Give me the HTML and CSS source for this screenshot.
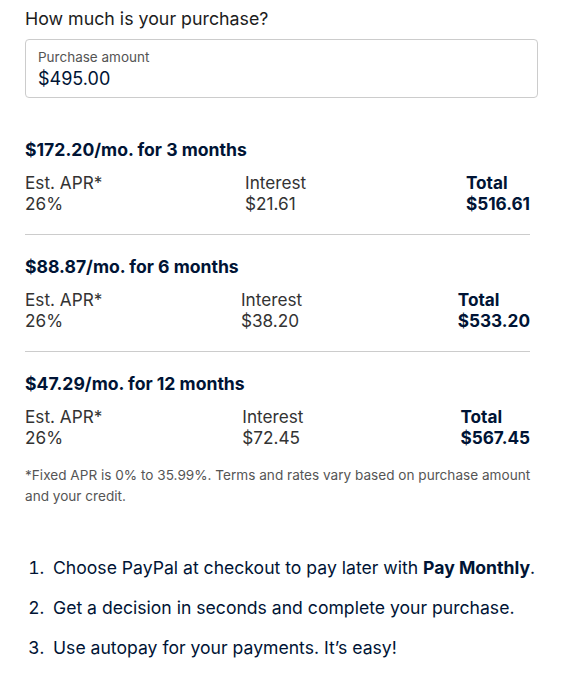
FILE: index.html
```html
<!DOCTYPE html>
<html lang="en">
<head>
<meta charset="utf-8">
<title>Pay Monthly calculator</title>
<link rel="stylesheet" href="styles.css">
</head>
<body>
<main class="calc">
  <h2 class="title">How much is your purchase?</h2>
  <div class="field">
    <div class="field-label">Purchase amount</div>
    <div class="field-value">$495.00</div>
  </div>

  <section class="plan first">
    <h3 class="plan-title">$172.20/mo. for 3 months</h3>
    <div class="plan-row">
      <div class="col"><div>Est. APR*</div><div>26%</div></div>
      <div class="col mid"><div>Interest</div><div>$21.61</div></div>
      <div class="col total"><div>Total</div><div>$516.61</div></div>
    </div>
  </section>

  <section class="plan">
    <h3 class="plan-title">$88.87/mo. for 6 months</h3>
    <div class="plan-row">
      <div class="col"><div>Est. APR*</div><div>26%</div></div>
      <div class="col mid"><div>Interest</div><div>$38.20</div></div>
      <div class="col total"><div>Total</div><div>$533.20</div></div>
    </div>
  </section>

  <section class="plan last">
    <h3 class="plan-title">$47.29/mo. for 12 months</h3>
    <div class="plan-row">
      <div class="col"><div>Est. APR*</div><div>26%</div></div>
      <div class="col mid"><div>Interest</div><div>$72.45</div></div>
      <div class="col total"><div>Total</div><div>$567.45</div></div>
    </div>
  </section>

  <p class="note">*Fixed APR is 0% to 35.99%. Terms and rates vary based on purchase amount and your credit.</p>

  <ol class="steps">
    <li>Choose PayPal at checkout to pay later with <strong>Pay Monthly</strong>.</li>
    <li>Get a decision in seconds and complete your purchase.</li>
    <li>Use autopay for your payments. It’s easy!</li>
  </ol>
</main>
</body>
</html>
```

FILE: styles.css
```css
* { box-sizing: border-box; }

body {
  margin: 0;
  background: #ffffff;
  font-family: Inter, "Liberation Sans", Arial, sans-serif;
  color: #1a1a1a;
}

.calc {
  width: 538px;
  padding: 7px 0 0 25px;
}

.title {
  margin: 0;
  font-size: 17.8px;
  line-height: 24px;
  font-weight: 400;
  color: #1c1c1c;
}

.field {
  margin-top: 8px;
  border: 1px solid #cccccc;
  border-radius: 4px;
  padding: 8px 12px 6px 12px;
}

.field-label {
  font-size: 13.5px;
  line-height: 18px;
  color: #545454;
  margin-bottom: 1px;
}

.field-value {
  font-size: 18px;
  line-height: 24px;
  color: #001435;
}

.plan {
  width: 505px;
  padding: 21px 0 20px;
  border-bottom: 1px solid #cccccc;
}

.plan.first { margin-top: 20px; }
.plan.last { border-bottom: none; padding-bottom: 17px; }

.plan-title {
  margin: 0;
  font-size: 17.6px;
  line-height: 22px;
  font-weight: 700;
  color: #001435;
}

.plan-row {
  margin-top: 11px;
  display: flex;
  justify-content: space-between;
  font-size: 17.2px;
  line-height: 21px;
  color: #333333;
}

.col.mid { margin-right: 17px; }

.col.total {
  font-weight: 700;
  color: #001435;
}

.note {
  margin: 0;
  width: 510px;
  font-size: 13.6px;
  line-height: 21px;
  color: #555555;
}

.steps {
  margin: 49px 0 0 0;
  padding-left: 24px;
  font-size: 17.6px;
  line-height: 24px;
  color: #001435;
}

.steps li {
  margin-bottom: 16px;
  padding-left: 4px;
}

.steps strong { font-weight: 700; }
```
